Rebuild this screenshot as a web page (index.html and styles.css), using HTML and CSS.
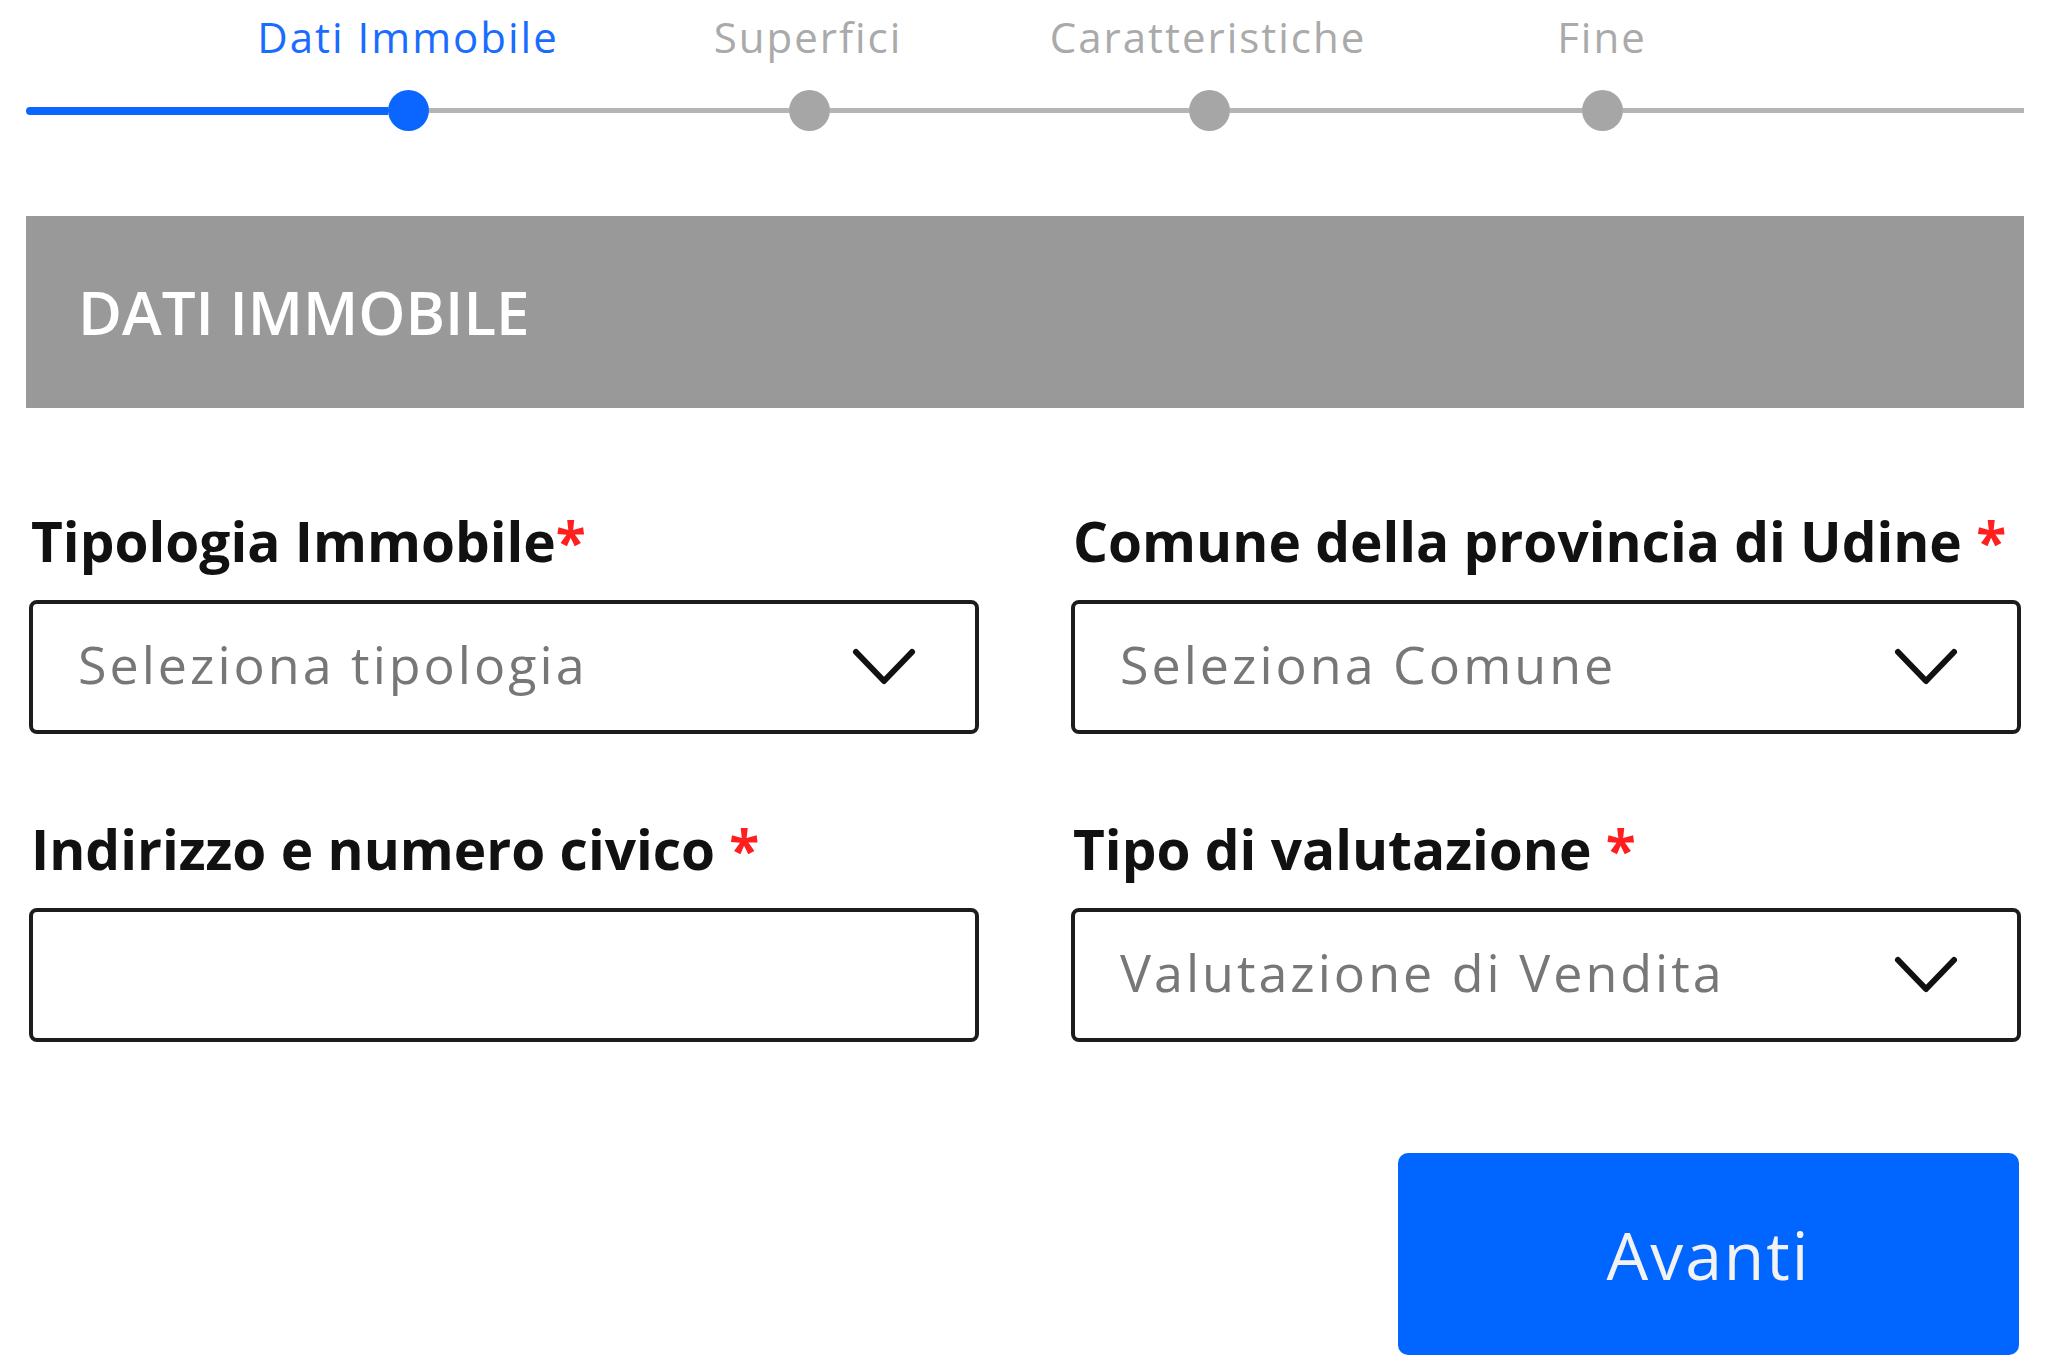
FILE: index.html
```html
<!DOCTYPE html>
<html lang="it">
<head>
  <meta charset="UTF-8">
  <meta name="viewport" content="width=device-width, initial-scale=1.0">
  <title>Valutazione Immobile</title>
  <link rel="stylesheet" href="styles.css">
</head>
<body>
  <div class="page">
    <div class="step-labels">
      <span class="step-label active">Dati Immobile</span>
      <span class="step-label">Superfici</span>
      <span class="step-label">Caratteristiche</span>
      <span class="step-label last">Fine</span>
    </div>
    <div class="step-track">
      <span class="seg done seg-1"></span>
      <span class="dot done"></span>
      <span class="seg seg-2"></span>
      <span class="dot"></span>
      <span class="seg seg-3"></span>
      <span class="dot"></span>
      <span class="seg seg-4"></span>
      <span class="dot"></span>
      <span class="seg seg-end"></span>
    </div>

    <div class="section-bar">DATI IMMOBILE</div>

    <form class="form-grid" onsubmit="return false;">
      <div class="field">
        <label class="field-label">Tipologia Immobile<span class="req">*</span></label>
        <div class="select-box">
          <span class="placeholder">Seleziona tipologia</span>
          <svg class="chevron" viewBox="0 0 64 38"><polyline points="4,4 32,33 60,4"/></svg>
        </div>
      </div>
      <div class="field">
        <label class="field-label">Comune della provincia di Udine <span class="req">*</span></label>
        <div class="select-box">
          <span class="placeholder">Seleziona Comune</span>
          <svg class="chevron" viewBox="0 0 64 38"><polyline points="4,4 32,33 60,4"/></svg>
        </div>
      </div>
      <div class="field">
        <label class="field-label" for="indirizzo">Indirizzo e numero civico <span class="req">*</span></label>
        <input class="text-box" id="indirizzo" type="text">
      </div>
      <div class="field">
        <label class="field-label">Tipo di valutazione <span class="req">*</span></label>
        <div class="select-box">
          <span class="placeholder">Valutazione di Vendita</span>
          <svg class="chevron" viewBox="0 0 64 38"><polyline points="4,4 32,33 60,4"/></svg>
        </div>
      </div>
      <div class="actions">
        <button type="button" class="next-btn">Avanti</button>
      </div>
    </form>
  </div>
</body>
</html>
```

FILE: styles.css
```css
body {
  margin: 0;
  background-color: #ffffff;
  font-family: "Open Sans", "Liberation Sans", sans-serif;
  color: #111111;
}
.page {
  padding: 0 21px 0 26px;
}

/* stepper */
.step-labels {
  display: flex;
  padding-top: 16px;
  padding-left: 182px;
}
.step-label {
  width: 400px;
  text-align: center;
  font-size: 42px;
  line-height: 42px;
  font-weight: 500;
  letter-spacing: 2px;
  color: #aaaaaa;
}
.step-label.last {
  width: 388px;
}
.step-label.active {
  color: #1a6cff;
}
.step-track {
  display: flex;
  align-items: center;
  height: 41px;
  margin-top: 32px;
}
.seg {
  height: 5px;
  background-color: #b4b4b4;
}
.seg.done {
  height: 8px;
  border-radius: 4px 0 0 4px;
  background-color: #0a66ff;
}
.seg-1 { width: 362px; }
.seg-2 { width: 360px; }
.seg-3 { width: 359px; }
.seg-4 { width: 352px; }
.seg-end { flex: 1; }
.dot {
  width: 41px;
  height: 41px;
  border-radius: 50%;
  background-color: #a6a6a6;
}
.dot.done {
  background-color: #0a66ff;
}

/* section header */
.section-bar {
  display: flex;
  align-items: center;
  height: 192px;
  margin-top: 85px;
  padding-left: 52px;
  background-color: #999999;
  color: #ffffff;
  font-size: 60px;
  line-height: 60px;
  font-weight: 600;
}

/* form */
.form-grid {
  display: grid;
  grid-template-columns: 1fr 1fr;
  column-gap: 92px;
  row-gap: 87px;
  padding: 0 3px;
  margin-top: 105px;
}
.field {
  display: flex;
  flex-direction: column;
  gap: 31px;
}
.field-label {
  font-size: 55px;
  line-height: 56px;
  font-weight: 700;
  white-space: nowrap;
  color: #111111;
  padding-left: 2px;
}
.req {
  color: #ff1f1f;
}
.select-box, .text-box {
  box-sizing: border-box;
  height: 134px;
  border: 4px solid #1c1c1c;
  border-radius: 8px;
  background: #ffffff;
}
.select-box {
  display: flex;
  align-items: center;
  justify-content: space-between;
  padding: 0 59px 0 45px;
}
.text-box {
  width: 100%;
  margin: 0;
  font: inherit;
}
.placeholder {
  margin-bottom: 8px;
  font-size: 52px;
  letter-spacing: 3px;
  color: #777777;
}
.chevron {
  width: 64px;
  height: 38px;
}
.chevron polyline {
  fill: none;
  stroke: #111111;
  stroke-width: 6;
  stroke-linecap: round;
  stroke-linejoin: round;
}

.actions {
  grid-column: 2;
  display: flex;
  justify-content: flex-end;
  margin-top: 24px;
}
.next-btn {
  width: 621px;
  height: 202px;
  margin-right: 2px;
  border: none;
  border-radius: 10px;
  background-color: #0066ff;
  color: #f2f2f2;
  font-family: inherit;
  font-size: 66px;
  letter-spacing: 2px;
  cursor: pointer;
}
```
